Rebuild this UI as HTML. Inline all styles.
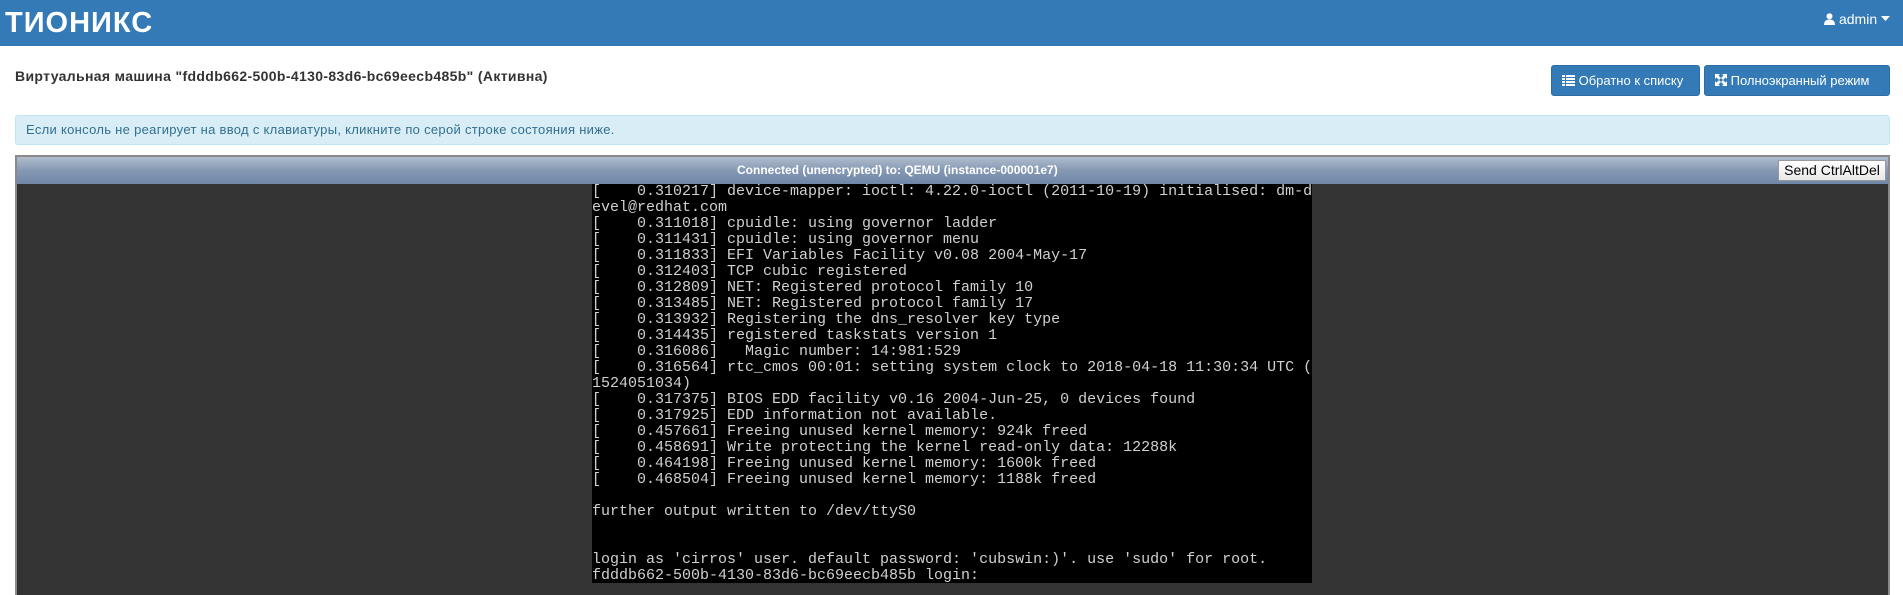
<!DOCTYPE html>
<html><head><meta charset="utf-8"><style>
*{box-sizing:border-box;margin:0;padding:0}
body{width:1903px;height:589px;overflow:hidden;background:#fff;font-family:"Liberation Sans",sans-serif;position:relative}
.nav{position:absolute;left:0;top:0;width:1903px;height:46px;background:#337ab7}
.logo{position:absolute;left:5px;top:3px;color:#fff;font-weight:bold;font-size:29px;letter-spacing:1px;line-height:40px}
.admin{position:absolute;right:13px;top:11px;color:#fff;font-size:14px}
.title{position:absolute;left:15px;top:68px;font-size:14px;font-weight:bold;color:#333;letter-spacing:0.35px}
.btn{position:absolute;top:65px;height:31px;background:#337ab7;border:1px solid #2e6da4;border-radius:3px;color:#fff;font-size:13px;line-height:29px;padding-left:10px}
.alert{position:absolute;left:15px;top:115px;width:1875px;height:30px;background:#d9edf7;border:1px solid #bce8f1;border-radius:3px;color:#31708f;font-size:13px;line-height:28px;padding-left:10px;letter-spacing:0.3px}
.frame{position:absolute;left:15px;top:155px;width:1875px;height:440px;background:#333;border:2px solid #8a8a8a;border-bottom:none}
.bar{position:absolute;left:0;top:0;width:100%;height:27px;background:linear-gradient(#b0bccd,#8598b3 50%,#6f87a8);color:#fff;font-size:12px;font-weight:bold;line-height:27px}
.bar .t{position:absolute;left:720px;top:0}
.cad{position:absolute;left:1761px;top:3px;height:21px;width:108px;background:linear-gradient(#fff,#e8e8e8);border:1px solid #999;color:#000;font-size:14px;font-weight:normal;line-height:19px;text-align:center}
.term{position:absolute;left:575px;top:27px;width:720px;height:399px;background:#000;color:#d0d0d0;font-family:"Liberation Mono",monospace;font-size:15px;line-height:16px;white-space:pre;overflow:hidden}
</style></head><body>
<div class="nav"><div class="logo">ТИОНИКС</div>
<div class="admin"><svg width="11" height="12" viewBox="0 0 11 12" style="vertical-align:-1px"><circle cx="5.5" cy="3.2" r="3" fill="#fff"/><path d="M0 12 Q0 6.5 5.5 6.5 Q11 6.5 11 12Z" fill="#fff"/></svg> admin <svg width="9" height="6" viewBox="0 0 9 6" style="vertical-align:2px"><path d="M0 0H9L4.5 5Z" fill="#fff"/></svg></div></div>
<div class="title">Виртуальная машина "fdddb662-500b-4130-83d6-bc69eecb485b" (Активна)</div>
<div class="btn" style="left:1551px;width:149px"><svg width="13" height="11" viewBox="0 0 13 11" style="vertical-align:-1px"><g fill="#fff"><rect x="0" y="0" width="3" height="2"/><rect x="4" y="0" width="9" height="2"/><rect x="0" y="3" width="3" height="2"/><rect x="4" y="3" width="9" height="2"/><rect x="0" y="6" width="3" height="2"/><rect x="4" y="6" width="9" height="2"/><rect x="0" y="9" width="3" height="2"/><rect x="4" y="9" width="9" height="2"/></g></svg> Обратно к списку</div>
<div class="btn" style="left:1704px;width:186px"><svg width="12" height="12" viewBox="0 0 12 12" style="vertical-align:-1px"><g fill="#fff"><path d="M0 0H5L3.5 1.5 6 4 4 6 1.5 3.5 0 5Z"/><path d="M12 0V5L10.5 3.5 8 6 6 4 8.5 1.5 7 0Z"/><path d="M0 12V7L1.5 8.5 4 6 6 8 3.5 10.5 5 12Z"/><path d="M12 12H7L8.5 10.5 6 8 8 6 10.5 8.5 12 7Z"/></g></svg> Полноэкранный режим</div>
<div class="alert">Если консоль не реагирует на ввод с клавиатуры, кликните по серой строке состояния ниже.</div>
<div class="frame"><div class="bar"><span class="t">Connected (unencrypted) to: QEMU (instance-000001e7)</span><div class="cad">Send CtrlAltDel</div></div>
<div class="term">[    0.310217] device-mapper: ioctl: 4.22.0-ioctl (2011-10-19) initialised: dm-d
evel@redhat.com
[    0.311018] cpuidle: using governor ladder
[    0.311431] cpuidle: using governor menu
[    0.311833] EFI Variables Facility v0.08 2004-May-17
[    0.312403] TCP cubic registered
[    0.312809] NET: Registered protocol family 10
[    0.313485] NET: Registered protocol family 17
[    0.313932] Registering the dns_resolver key type
[    0.314435] registered taskstats version 1
[    0.316086]   Magic number: 14:981:529
[    0.316564] rtc_cmos 00:01: setting system clock to 2018-04-18 11:30:34 UTC (
1524051034)
[    0.317375] BIOS EDD facility v0.16 2004-Jun-25, 0 devices found
[    0.317925] EDD information not available.
[    0.457661] Freeing unused kernel memory: 924k freed
[    0.458691] Write protecting the kernel read-only data: 12288k
[    0.464198] Freeing unused kernel memory: 1600k freed
[    0.468504] Freeing unused kernel memory: 1188k freed

further output written to /dev/ttyS0


login as 'cirros' user. default password: 'cubswin:)'. use 'sudo' for root.
fdddb662-500b-4130-83d6-bc69eecb485b login:</div></div>
</body></html>
